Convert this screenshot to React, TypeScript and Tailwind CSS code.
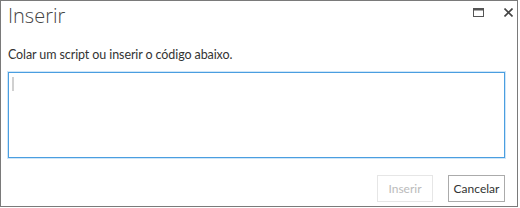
import React from 'react';

const App: React.FC = () => {
  return (
    <div className="w-[520px] h-[208px] bg-white" style={{ fontFamily: '"Open Sans", "Liberation Sans", sans-serif' }}>
      <div className="w-[518px] h-[207px] border border-[#7a7a7a] bg-white flex flex-col">
        {/* Title bar */}
        <div className="flex items-start justify-between h-[30px]">
          <h1 className="pl-[7px] pt-[2px] text-[20px] leading-[26px] font-light text-[#444]">Inserir</h1>
          <div className="flex items-center gap-[20px] pt-[7px] pr-[4px]">
            <svg width="11" height="9" viewBox="0 0 11 9" className="text-[#555]">
              <rect x="0.5" y="0.5" width="10" height="8" fill="none" stroke="currentColor" />
              <rect x="0.5" y="0.5" width="10" height="2" fill="currentColor" />
            </svg>
            <svg width="9" height="9" viewBox="0 0 9 9" className="text-[#444]">
              <path d="M0.5 0.5 L8.5 8.5 M8.5 0.5 L0.5 8.5" stroke="currentColor" strokeWidth="1.6" />
            </svg>
          </div>
        </div>

        {/* Body */}
        <div className="flex flex-col pl-[7px] pr-[12px] font-['Lato',sans-serif]">
          <p className="mt-[16px] text-[12.5px] leading-[16px] text-[#333] tracking-[-0.1px]">Colar um script ou inserir o código abaixo.</p>
          <div className="mt-[9px] h-[86px] border border-[#4a9ee0] shadow-[0_0_0_1px_#cfe6f8] pl-[3px] pt-[4px]">
            <div className="w-[2px] h-[14px] bg-[#d0d0d0]"></div>
          </div>
          <div className="flex justify-end gap-[15px] mt-[17px]">
            <button className="w-[56px] h-[27px] border border-[#e6e6e6] bg-white text-[12px] text-[#bbb]">Inserir</button>
            <button className="w-[57px] h-[27px] border border-[#ababab] bg-white text-[12px] text-[#333]">Cancelar</button>
          </div>
        </div>
      </div>
    </div>
  );
};

export default App;
